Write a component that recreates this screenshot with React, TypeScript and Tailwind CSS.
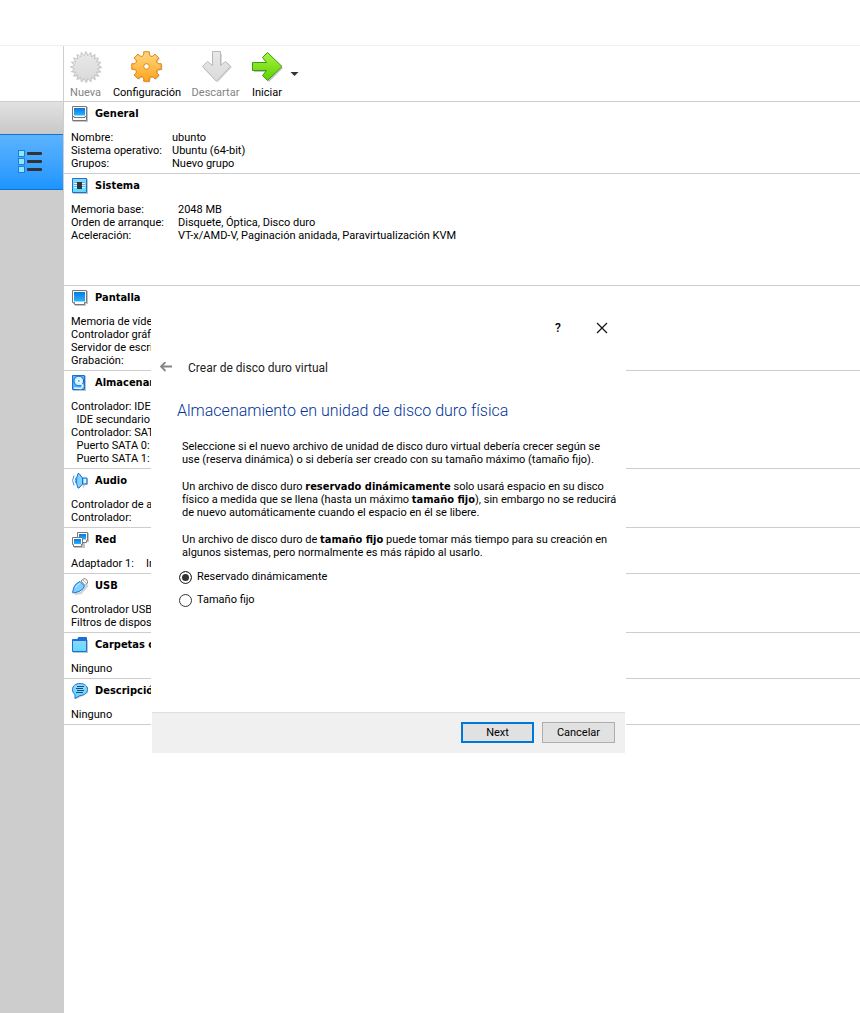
import type { ReactNode } from "react";

const BLUE = "#1b6fd6";

function Defs() {
  return (
    <svg width="0" height="0" className="absolute" aria-hidden="true">
      <defs>
        <linearGradient id="screen" x1="0" y1="0" x2="0" y2="1">
          <stop offset="0" stopColor="#0a78e0" />
          <stop offset="1" stopColor="#27b4ff" />
        </linearGradient>
        <linearGradient id="sky" x1="0" y1="0" x2="0" y2="1">
          <stop offset="0" stopColor="#8fd6ff" />
          <stop offset="1" stopColor="#5cdcff" />
        </linearGradient>
        <linearGradient id="orange" x1="0" y1="0" x2="0" y2="1">
          <stop offset="0" stopColor="#ffd884" />
          <stop offset="1" stopColor="#ffa41c" />
        </linearGradient>
        <linearGradient id="green" x1="0" y1="0" x2="0" y2="1">
          <stop offset="0" stopColor="#a9f43c" />
          <stop offset="1" stopColor="#5fcf04" />
        </linearGradient>
        <linearGradient id="gray" x1="0" y1="0" x2="0" y2="1">
          <stop offset="0" stopColor="#e8e8e8" />
          <stop offset="1" stopColor="#dadada" />
        </linearGradient>
      </defs>
    </svg>
  );
}

function Small({ children }: { children: ReactNode }) {
  return (
    <svg viewBox="0 0 17 17" width="17" height="17" aria-hidden="true" className="shrink-0">
      {children}
    </svg>
  );
}

const icons: Record<string, ReactNode> = {
  general: (
    <Small>
      <path d="M1 1h15v15H1z" fill="#c4c4c4" />
      <path d="M.5.5h14v14H.5z" fill="#fff" stroke="#777" />
      <path d="M2 2h11v7.500H2z" fill="url(#screen)" />
      <path d="M1 10.500h1v1h11v-1h1" fill="none" stroke="#777" />
    </Small>
  ),
  system: (
    <Small>
      <path d="M1 1h15v15H1z" fill="#c4c4c4" />
      <path d="M.5.5h14v14H.5z" fill="url(#sky)" stroke={BLUE} />
      <path d="M2 5.500h11M2 7.500h11M2 9.500h11" stroke="#e4f8ff" />
      <path d="M2 4.500h11M2 6.500h11M2 8.500h11" stroke="#3a9be8" strokeWidth=".6" />
      <path d="M5 4h5v7H5z" fill="#333" />
    </Small>
  ),
  display: (
    <Small>
      <path d="M1 1h15v13h-2v2H3v-2H1z" fill="#c4c4c4" />
      <path d="M.5.5h14v12h-2v2h-10v-2h-2z" fill="#fff" stroke="#777" />
      <path d="M2 2h11v9.500H2z" fill="url(#screen)" />
    </Small>
  ),
  storage: (
    <Small>
      <path d="M1 1h13v15H1z" fill="#c4c4c4" />
      <path d="M.5.5h12v14H.5z" fill="#49b4ff" stroke={BLUE} />
      <circle cx="6.800" cy="6" r="4.800" fill="#d4f0ff" stroke="#1767c8" />
      <circle cx="6.800" cy="6" r="1.600" fill="#49b4ff" stroke="#fff" />
      <path d="M8 7l3 4-2 2.500-7-.5" fill="none" stroke="#e9f8ff" strokeWidth="1.300" />
    </Small>
  ),
  audio: (
    <Small>
      <path d="M9 2l3 4h4v6h-3l-2 4z" fill="#d0d0d0" />
      <path d="M2 2.500Q-.800 7.500 2 12.500M4 4.500Q2.300 7.500 4 10.500" fill="none" stroke="#3a97e8" />
      <path d="M6 .5h1L10.500 5h4.500v6h-4.500L7 15H6Q4.500 12 4.500 8T6 .5z" fill="#83d2ff" stroke={BLUE} />
      <path d="M10.500 5v6" stroke={BLUE} />
      <path d="M13 6v4" stroke="#d9f5ff" strokeWidth="2" />
    </Small>
  ),
  network: (
    <Small>
      <path d="M6 1h11v9h-4v6H2V9h4z" fill="#c4c4c4" />
      <path d="M5.500.5h10v8h-1v2h-8v-2h-1z" fill="#fff" stroke="#777" />
      <path d="M7 2h7v5.500H7z" fill="url(#screen)" />
      <path d="M.5 5.500h10v7h-1v2h-8v-2h-1z" fill="#fff" stroke="#777" />
      <path d="M2 7h7v5H2z" fill="url(#screen)" />
    </Small>
  ),
  usb: (
    <Small>
      <path d="M3 16l6-1 7-8" stroke="#d0d0d0" strokeWidth="2" fill="none" />
      <path d="M9 3l3-2.500Q16 1 15.500 5L13 7.500z" fill="#f5f5f5" stroke="#888" />
      <path d="M11.500 2.500l1 1M13.500 4.500l1 1" stroke="#777" />
      <path d="M8 3.500l4.500 4.500Q11 12 7 13.500L1.500 15 .5 14.500 2 9Q4 5 8 3.500z" fill="#7dd0ff" stroke={BLUE} />
      <path d="M3.500 10Q5 6.500 8 5.500" stroke="#c7eeff" fill="none" />
    </Small>
  ),
  folder: (
    <Small>
      <path d="M1 3h15v13H1z" fill="#c4c4c4" />
      <path d="M.5 2.500h5l1-2h8v14H.5z" fill={BLUE} stroke={BLUE} />
      <path d="M1 4h13v10H1z" fill="url(#sky)" />
    </Small>
  ),
  description: (
    <Small>
      <path d="M3 4h13v6l-7 4-5 2z" fill="#d0d0d0" />
      <path d="M8 .5c4.500 0 7.500 2.500 7.500 5.800S12.500 12.500 8 12.500L3 15.500v-4C1.500 10.500.5 8.500.5 6.500.5 3 3.500.5 8 .5z" fill="url(#sky)" stroke={BLUE} />
      <path d="M5 3.500h7M4 5.500h7M5 7.500h7M4 9.500h7" stroke="#234a70" />
    </Small>
  ),
};

function burst(points: number, outer: number, inner: number) {
  return Array.from({ length: points * 2 }, (_, i) => {
    const r = i % 2 ? inner : outer;
    const a = (Math.PI * i) / points;
    return `${(16 + r * Math.sin(a)).toFixed(2)},${(16 - r * Math.cos(a)).toFixed(2)}`;
  }).join(" ");
}

function gear() {
  const at = (deg: number, r: number) => {
    const a = (deg * Math.PI) / 180;
    return `${(15.5 + r * Math.sin(a)).toFixed(2)} ${(15.5 - r * Math.cos(a)).toFixed(2)}`;
  };
  let d = `M${at(-11, 15)}`;
  for (let i = 0; i < 8; i++) {
    const c = i * 45;
    d += `L${at(c + 11, 15)}L${at(c + 12, 12.8)}Q${at(c + 22.5, 9.6)} ${at(c + 33, 12.8)}L${at(c + 34, 15)}`;
  }
  return `${d}z`;
}

const NewIcon = (
  <svg viewBox="0 0 32 32" width="32" height="32" aria-hidden="true">
    <polygon points={burst(20, 15.5, 11.5)} fill="#e6e6e6" transform="translate(1 1)" />
    <polygon points={burst(20, 15.5, 11.5)} fill="url(#gray)" stroke="#bdbdbd" strokeWidth=".8" />
  </svg>
);
const GearIcon = (
  <svg viewBox="0 0 32 32" width="32" height="32" aria-hidden="true">
    <path d={gear()} fill="#c9c9c9" transform="translate(1 1)" />
    <path d={gear()} fill="url(#orange)" stroke="#e58309" strokeLinejoin="round" />
    <circle cx="15.500" cy="15.500" r="2.800" fill="#fff" stroke="#e58309" />
  </svg>
);
const DiscardIcon = (
  <svg viewBox="0 0 32 32" width="32" height="32" aria-hidden="true">
    <path d="M12 2h9v12l5-4 5 5-14 15L3 17l5-5 4 3z" fill="#dadada" transform="translate(1 1)" />
    <path d="M12.500.5h8v14l5-4 5 5-14 15-14-15 5-5 5 4z" fill="url(#gray)" stroke="#b8b8b8" />
  </svg>
);
const StartIcon = (
  <svg viewBox="0 0 32 32" width="32" height="32" aria-hidden="true">
    <path d="M3 13h14l-4-5 5-5 14 14-14 14-5-5 4-5H3z" fill="#c4c4c4" />
    <path d="M1.500 11.500h14l-4-5 5-5 14.500 14-14.500 14-5-5 4-5h-14z" fill="url(#green)" stroke="#389c18" />
  </svg>
);

type SectionProps = {
  icon: string;
  title: string;
  rows: [string, string?][];
  labelWidth?: string;
  extra?: string;
};

function Section({ icon, title, rows, labelWidth = "w-[101px]", extra = "pb-[3px]" }: SectionProps) {
  return (
    <section className={`border-b border-[#cdcdcd] pl-[7px] ${extra}`}>
      <h2 className="mb-1 flex h-[25px] items-center gap-[6px] pl-px font-['DejaVu_Sans_Condensed','DejaVu_Sans',sans-serif] font-bold">
        {icons[icon]}
        {title}
      </h2>
      <dl>
        {rows.map(([label, value]) => (
          <div key={label} className="flex whitespace-pre leading-[13px]">
            <dt className={`shrink-0 ${value ? labelWidth : ""}`}>{label}</dt>
            <dd>{value}</dd>
          </div>
        ))}
      </dl>
    </section>
  );
}

function Tool({ icon, label, width, disabled }: { icon: ReactNode; label: string; width: string; disabled?: boolean }) {
  return (
    <button
      type="button"
      disabled={disabled}
      className={`flex shrink-0 flex-col items-center gap-[3px] whitespace-nowrap disabled:text-[#838383] ${width}`}
    >
      {icon}
      <span className="leading-[13px]">{label}</span>
    </button>
  );
}

function Sidebar() {
  return (
    <nav className="flex w-16 shrink-0 flex-col border-r border-[#cdcdcd] bg-[#cdcdcd]">
      <div className="h-14 border-b border-[#cdcdcd] bg-white" />
      <div className="h-8 bg-linear-to-b from-[#e2e2e2] to-[#c8c8c8]" />
      <button
        type="button"
        aria-label="Detalles"
        className="flex h-14 items-center border-y border-[#1273cc] bg-linear-to-b from-[#5bb3ff] to-[#1a95ff] pl-[18px]"
      >
        <svg viewBox="0 0 25 24" width="25" height="24" aria-hidden="true">
          {[0, 8, 16].map((y) => (
            <g key={y}>
              <rect x=".5" y={y + 0.5} width="6" height="6" fill="#8ee6ff" stroke="#1c7ed6" />
              <rect x="9" y={y + 2} width="15" height="3" rx="1" fill="#333" />
            </g>
          ))}
        </svg>
      </button>
    </nav>
  );
}

function Choice({ label, checked }: { label: string; checked?: boolean }) {
  return (
    <label className="flex h-[23px] items-center gap-[5px]">
      <input
        type="radio"
        name="storage"
        defaultChecked={checked}
        className="size-[13px] appearance-none rounded-full border border-[#333] bg-white checked:bg-[#333] checked:shadow-[inset_0_0_0_2px_white]"
      />
      {label}
    </label>
  );
}

function Strong({ children }: { children: ReactNode }) {
  return <b className="font-['DejaVu_Sans_Condensed','DejaVu_Sans',sans-serif]">{children}</b>;
}

function Wizard() {
  return (
    <div
      role="dialog"
      aria-labelledby="wizard-title"
      className="absolute left-[151px] top-[310px] w-[475px] bg-white pb-px"
    >
      <div className="flex h-9 items-center justify-end gap-8 pr-[18px]">
        <button type="button" aria-label="Ayuda" className="w-3 text-[12px] font-medium">
          ?
        </button>
        <button type="button" aria-label="Cerrar">
          <svg viewBox="0 0 12 12" width="12" height="12" aria-hidden="true">
            <path d="M1 1l10 10M11 1L1 11" stroke="#111" strokeWidth="1.200" />
          </svg>
        </button>
      </div>
      <div className="flex h-11 items-center gap-4 pl-[9px]">
        <button type="button" aria-label="Atrás">
          <svg viewBox="0 0 12 12" width="12" height="12" aria-hidden="true">
            <path d="M5.500 0L1 4.500 5.500 9M1 4.500H12" fill="none" stroke="#858585" strokeWidth="1.800" />
          </svg>
        </button>
        <h1 id="wizard-title" className="text-[12px] text-[#222]">
          Crear de disco duro virtual
        </h1>
      </div>
      <h2 className="pl-[26px] pt-[11px] text-[16px] font-light leading-5 text-[#003399]">
        Almacenamiento en unidad de disco duro física
      </h2>
      <div className="flex flex-col gap-[14px] whitespace-nowrap pl-[31px] pt-[19px] leading-[13px]">
        <p>
          Seleccione si el nuevo archivo de unidad de disco duro virtual debería crecer según se
          <br />
          use (reserva dinámica) o si debería ser creado con su tamaño máximo (tamaño fijo).
        </p>
        <p>
          Un archivo de disco duro <Strong>reservado dinámicamente</Strong> solo usará espacio en su disco
          <br />
          físico a medida que se llena (hasta un máximo <Strong>tamaño fijo</Strong>), sin embargo no se reducirá
          <br />
          de nuevo automáticamente cuando el espacio en él se libere.
        </p>
        <p>
          Un archivo de disco duro de <Strong>tamaño fijo</Strong> puede tomar más tiempo para su creación en
          <br />
          algunos sistemas, pero normalmente es más rápido al usarlo.
        </p>
      </div>
      <fieldset className="pb-[100px] pl-7 pt-[7px]">
        <Choice label="Reservado dinámicamente" checked />
        <Choice label="Tamaño fijo" />
      </fieldset>
      <div className="mx-px flex h-[41px] items-start justify-end gap-2 border-t border-[#dfdfdf] bg-[#f0f0f0] pr-[10px] pt-[9px]">
        <button type="button" className="h-[21px] w-[73px] border-2 border-[#0078d7] bg-[#e1e1e1] leading-[13px]">
          Next
        </button>
        <button type="button" className="h-[21px] w-[73px] border border-[#adadad] bg-[#e1e1e1] leading-[13px]">
          Cancelar
        </button>
      </div>
    </div>
  );
}

export default function App() {
  return (
    <div className="relative flex min-h-screen flex-col overflow-hidden bg-white font-[Roboto,sans-serif] text-[11px] text-black">
      <Defs />
      <div className="h-[46px] shrink-0 border-b border-[#f0f0f0]" />
      <div className="flex grow">
        <Sidebar />
        <main className="min-w-0 grow">
          <div className="flex h-14 items-start border-b border-[#cdcdcd] pt-[5px]">
            <Tool icon={NewIcon} label="Nueva" width="w-[43px]" disabled />
            <Tool icon={GearIcon} label="Configuración" width="w-[80px]" />
            <Tool icon={DiscardIcon} label="Descartar" width="w-[57px]" disabled />
            <Tool icon={StartIcon} label="Iniciar" width="w-[46px]" />
            <button type="button" aria-label="Opciones de inicio" className="pt-[21px]">
              <svg viewBox="0 0 9 4" width="9" height="4" aria-hidden="true">
                <path d="M.5 0h8l-4 4z" fill="#333" />
              </svg>
            </button>
          </div>
          <Section
            icon="general"
            title="General"
            rows={[["Nombre:", "ubunto"], ["Sistema operativo:", "Ubuntu (64-bit)"], ["Grupos:", "Nuevo grupo"]]}
          />
          <Section
            icon="system"
            title="Sistema"
            labelWidth="w-[107px]"
            extra="pb-[43px]"
            rows={[
              ["Memoria base:", "2048 MB"],
              ["Orden de arranque:", "Disquete, Óptica, Disco duro"],
              ["Aceleración:", "VT-x/AMD-V, Paginación anidada, Paravirtualización KVM"],
            ]}
          />
          <Section
            icon="display"
            title="Pantalla"
            rows={[["Memoria de vídeo:"], ["Controlador gráfico:"], ["Servidor de escritorio:"], ["Grabación:"]]}
          />
          <Section
            icon="storage"
            title="Almacenamiento"
            rows={[
              ["Controlador: IDE"],
              ["  IDE secundario"],
              ["Controlador: SATA"],
              ["  Puerto SATA 0:"],
              ["  Puerto SATA 1:"],
            ]}
          />
          <Section icon="audio" title="Audio" rows={[["Controlador de audio:"], ["Controlador:"]]} />
          <Section icon="network" title="Red" labelWidth="w-[75px]" rows={[["Adaptador 1:", "Intel"]]} />
          <Section icon="usb" title="USB" rows={[["Controlador USB:"], ["Filtros de dispositivos:"]]} />
          <Section icon="folder" title="Carpetas compartidas" rows={[["Ninguno"]]} />
          <Section icon="description" title="Descripción" rows={[["Ninguno"]]} />
        </main>
      </div>
      <Wizard />
    </div>
  );
}
